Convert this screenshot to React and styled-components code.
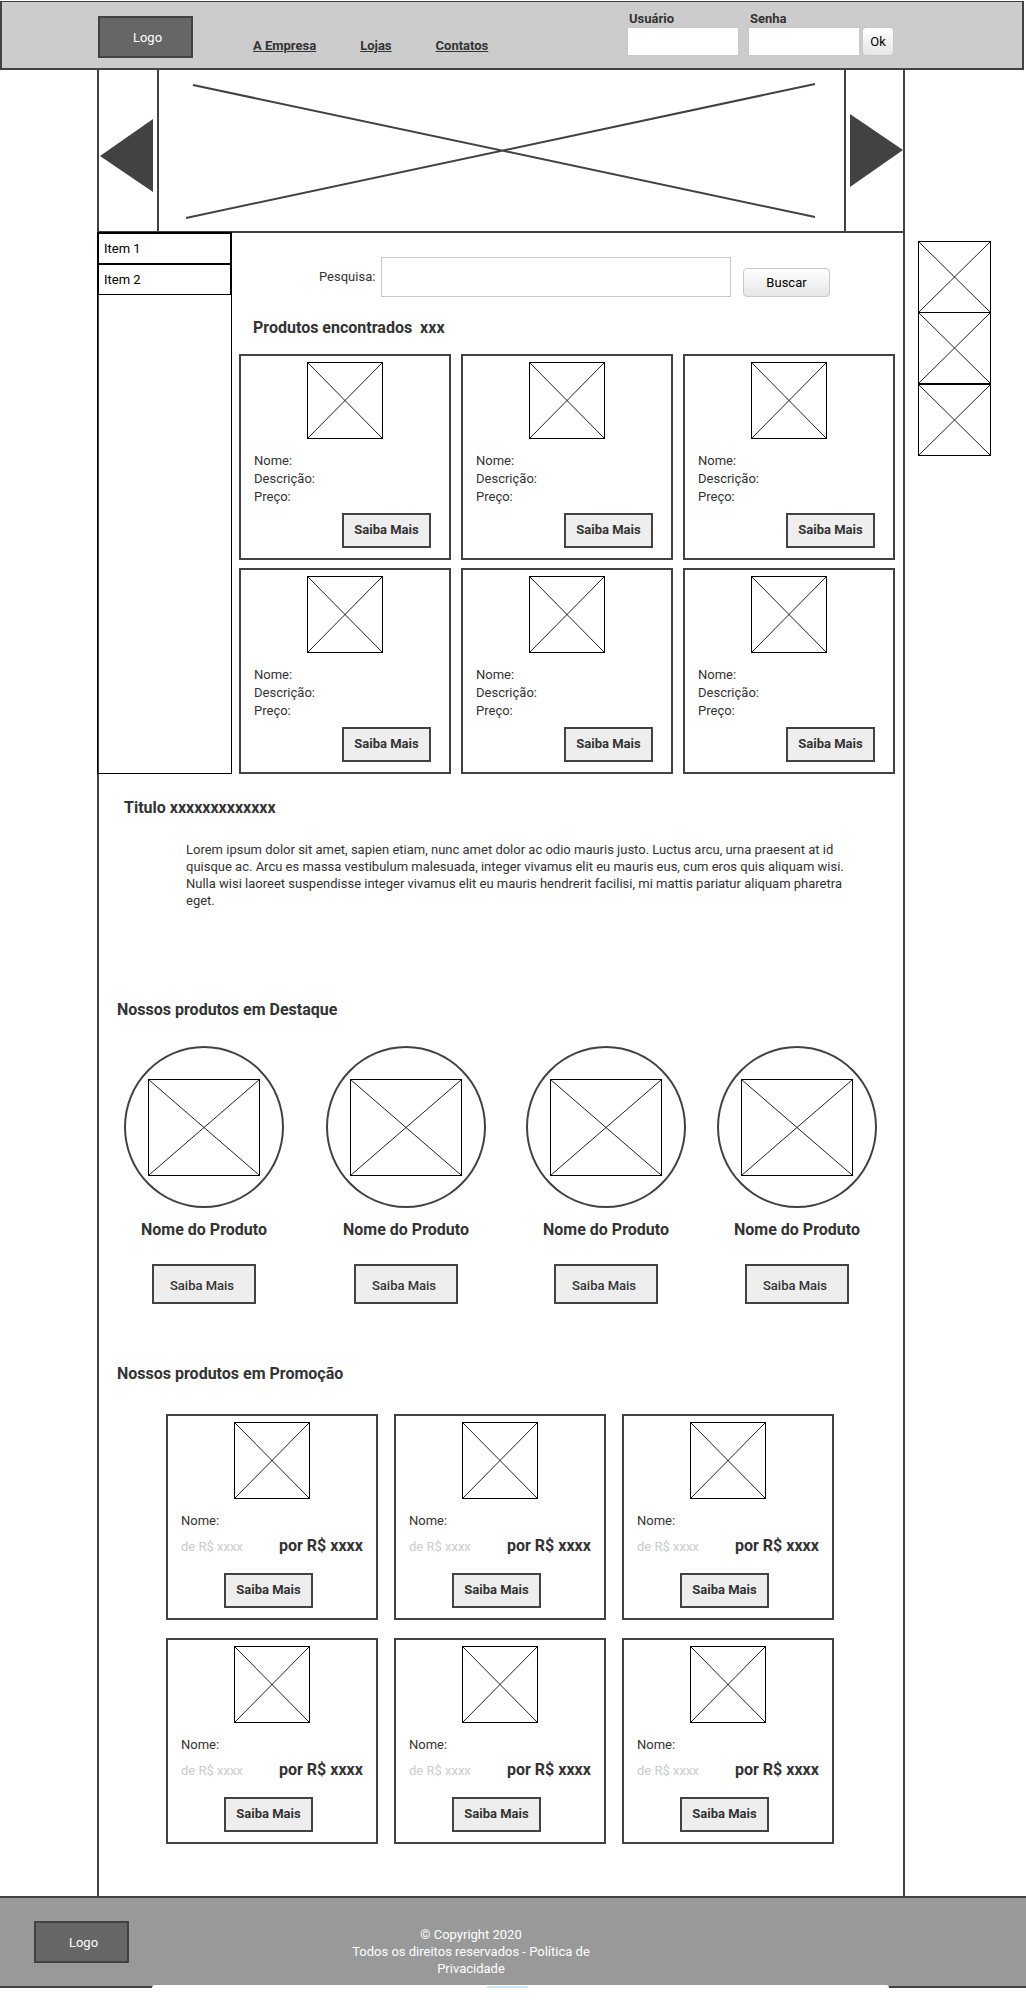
import React from "react";
import styled, { createGlobalStyle } from "styled-components";

const line = "#424242";
const ink = "#333";

const GlobalStyle = createGlobalStyle`
  * { box-sizing: border-box; }
  body {
    margin: 0;
    background: #fff;
    color: ${ink};
    font-family: Roboto, "Liberation Sans", sans-serif;
    font-size: 13px;
    line-height: 17px;
  }
  h2, h3, p, ul { margin: 0; padding: 0; }
  ul { list-style: none; }
  button, input { font: inherit; margin: 0; }
`;

const Header = styled.header`
  display: flex;
  align-items: flex-start;
  margin: 1px 2px 0 0;
  padding-left: 96px;
  height: 69px;
  background: #ccc;
  border: 2px solid ${line};
  border-top-width: 1px;
`;

const Logo = styled.div`
  flex: none;
  width: 95px;
  height: 42px;
  padding-left: 4px;
  border: 2px solid ${line};
  background: #666;
  color: #fff;
  line-height: 39px;
  text-align: center;
`;

const HeaderLogo = styled(Logo)`
  margin-top: 14px;
`;

const Nav = styled.nav`
  display: flex;
  gap: 44px;
  margin: 35px 0 0 60px;
`;

const NavLink = styled.a`
  color: ${ink};
  font-weight: 700;
  text-decoration: underline;
  white-space: nowrap;
`;

const Login = styled.form`
  display: flex;
  align-items: flex-end;
  margin: 7px 128px 0 auto;
`;

const Field = styled.div`
  display: flex;
  flex-direction: column;
  width: 112px;
  margin-right: 9px;

  &:nth-of-type(2) { margin-right: 2px; }
`;

const FieldLabel = styled.label`
  padding: 1px 0 0 2px;
  font-weight: 700;
`;

const TextInput = styled.input`
  width: 100%;
  height: ${(p) => p.$height}px;
  padding: 0 6px;
  background: #fff;
  border: 1px solid #c8c8c8;
  border-radius: 0;
`;

const SoftButton = styled.button`
  width: ${(p) => p.$width}px;
  height: 29px;
  padding: 0;
  border: 1px solid #c8c8c8;
  border-radius: 4px;
  background: linear-gradient(#fff, #e6e6e6);
  color: #000;
`;

const Middle = styled.div`
  display: flex;
  align-items: stretch;
  padding-left: 97px;
`;

const Frame = styled.main`
  flex: 1;
  min-width: 0;
  padding-bottom: 52px;
  border: solid ${line};
  border-width: 0 2px;
`;

const Rail = styled.aside`
  width: 121px;
  padding: 171px 0 0 13px;
`;

const Carousel = styled.section`
  display: flex;
  height: 163px;
  border-bottom: 2px solid ${line};
`;

const Arrow = styled.button`
  flex: none;
  width: ${(p) => p.$width}px;
  padding: ${(p) => p.$pad};
  background: none;
  border: solid ${line};
  border-width: ${(p) => (p.$side === "left" ? "0 2px 0 0" : "0 0 0 2px")};
  text-align: left;

  svg { display: block; }
`;

const Slide = styled.svg`
  flex: 1;
  min-width: 0;
  height: 161px;
`;

const Catalog = styled.div`
  display: flex;
`;

const Sidebar = styled.nav`
  flex: none;
  width: 135px;
  margin: -1px 0 0 -2px;
  border: 1px solid #000;
`;

const SidebarItem = styled.li`
  height: 31px;
  border: 1px solid #000;
`;

const SidebarLink = styled.a`
  display: block;
  padding-left: 5px;
  color: #000;
  line-height: 29px;
  text-decoration: none;
`;

const Results = styled.section`
  flex: 1;
  min-width: 0;
  padding: 24px 8px 0 7px;
`;

const Search = styled.form`
  display: flex;
  align-items: flex-end;
  padding: 0 65px 0 80px;
`;

const SearchLabel = styled.label`
  margin-right: 6px;
  line-height: 40px;
`;

const SearchBox = styled.div`
  flex: 1;
  margin-right: 12px;
  display: flex;
`;

const Heading = styled.h2`
  padding: ${(p) => p.$pad};
  font-size: 16px;
  line-height: 20px;
  font-weight: 700;
  white-space: pre;
`;

const CardGrid = styled.div`
  display: grid;
  grid-template-columns: repeat(3, minmax(0, 1fr));
  gap: ${(p) => p.$gap};
  padding: ${(p) => p.$pad || 0};
`;

const Card = styled.article`
  display: flex;
  flex-direction: column;
  height: 206px;
  padding: 6px 13px 0;
  border: 2px solid ${line};
`;

const CrossFrame = styled.div`
  flex: none;
  align-self: center;
  width: ${(p) => p.$w}px;
  height: ${(p) => p.$h}px;
  border: 1px solid #000;

  svg { display: block; width: 100%; height: 100%; }
`;

const Thumb = styled(CrossFrame)`
  &:nth-child(2) { height: 71px; border-top: 0; }
`;

const Specs = styled.div`
  padding-top: 13px;
  line-height: 18px;
`;

const MoreButton = styled.button`
  width: ${(p) => (p.$large ? 104 : 89)}px;
  height: ${(p) => (p.$large ? 40 : 35)}px;
  padding: ${(p) => (p.$large ? "2px 4px 0 0" : "0 0 2px")};
  background: #eee;
  border: 2px solid ${line};
  color: ${ink};
  font-weight: ${(p) => (p.$large ? 500 : 700)};
`;

const CardAction = styled.div`
  display: flex;
  justify-content: ${(p) => (p.$center ? "center" : "flex-end")};
  padding: ${(p) => (p.$center ? "17px 7px 0 0" : "7px 5px 0 0")};
`;

const Prices = styled.div`
  display: flex;
  justify-content: space-between;
  align-items: baseline;
  height: 26px;
  padding-top: 6px;
  line-height: 20px;
  white-space: nowrap;
`;

const OldPrice = styled.span`
  color: #ccc;
`;

const NewPrice = styled.strong`
  width: 84px;
  font-size: 16px;
`;

const Story = styled.p`
  padding: 23px 52px 0 87px;
`;

const Featured = styled.div`
  display: grid;
  grid-template-columns: 202fr 200fr 191fr 160fr;
  padding: 26px 26px 0 25px;
`;

const FeaturedItem = styled.article`
  display: flex;
  flex-direction: column;
  align-items: center;
  width: 160px;
`;

const Circle = styled.div`
  display: flex;
  align-items: center;
  justify-content: center;
  width: 160px;
  height: 162px;
  border: 2px solid ${line};
  border-radius: 50%;
`;

const ProductName = styled.h3`
  padding: 12px 0 24px;
  font-size: 16px;
  line-height: 20px;
  font-weight: 700;
  white-space: nowrap;
`;

const Footer = styled.footer`
  display: flex;
  flex-direction: column;
  background: #999;
  border: solid ${line};
  border-width: 2px 0 0;
`;

const FooterBody = styled.div`
  display: flex;
  align-items: flex-start;
  height: 87px;
  padding: 23px 34px 0;
`;

const Copyright = styled.p`
  width: 242px;
  margin: 5px 0 0 221px;
  color: #fff;
  text-align: center;
`;

const FooterEdge = styled.div`
  display: flex;
  height: 3px;
  padding: 0 137px 0 152px;
  background: linear-gradient(#999 1px, ${line} 1px);
`;

const Sheet = styled.div`
  flex: 1;
  display: flex;
  align-items: flex-end;
  justify-content: center;
  padding-right: 26px;
  background: #fff;
  border-radius: 4px 4px 0 0;
`;

const SheetTab = styled.div`
  width: 41px;
  height: 2px;
  background: #cfe3f8;
`;

function Diagonals() {
  return (
    <svg viewBox="0 0 100 100" preserveAspectRatio="none" aria-hidden="true">
      <path
        d="M0 0L100 100M100 0L0 100"
        stroke="#222"
        strokeWidth="1"
        fill="none"
        vectorEffect="non-scaling-stroke"
      />
    </svg>
  );
}

function ResultCard() {
  return (
    <Card>
      <CrossFrame $w={76} $h={77}><Diagonals /></CrossFrame>
      <Specs>
        <p>Nome:</p>
        <p>Descrição:</p>
        <p>Preço:</p>
      </Specs>
      <CardAction><MoreButton type="button">Saiba Mais</MoreButton></CardAction>
    </Card>
  );
}

function PromoCard() {
  return (
    <Card>
      <CrossFrame $w={76} $h={77}><Diagonals /></CrossFrame>
      <Specs><p>Nome:</p></Specs>
      <Prices>
        <OldPrice>de R$ xxxx</OldPrice>
        <NewPrice>por R$ xxxx</NewPrice>
      </Prices>
      <CardAction $center><MoreButton type="button">Saiba Mais</MoreButton></CardAction>
    </Card>
  );
}

const six = [1, 2, 3, 4, 5, 6];
const hold = (e) => e.preventDefault();

export default function App() {
  return (
    <>
      <GlobalStyle />
      <Header>
        <HeaderLogo>Logo</HeaderLogo>
        <Nav>
          <NavLink href="#empresa">A Empresa</NavLink>
          <NavLink href="#lojas">Lojas</NavLink>
          <NavLink href="#contatos">Contatos</NavLink>
        </Nav>
        <Login onSubmit={hold}>
          <Field>
            <FieldLabel htmlFor="usuario">Usuário</FieldLabel>
            <TextInput id="usuario" type="text" $height={29} />
          </Field>
          <Field>
            <FieldLabel htmlFor="senha">Senha</FieldLabel>
            <TextInput id="senha" type="password" $height={29} />
          </Field>
          <SoftButton type="submit" $width={32}>Ok</SoftButton>
        </Login>
      </Header>

      <Middle>
        <Frame>
          <Carousel>
            <Arrow type="button" aria-label="Anterior" $side="left" $width={60} $pad="10px 0 0 1px">
              <svg width="53" height="73" viewBox="0 0 53 73"><path d="M0 37L53 0V73Z" fill={line} /></svg>
            </Arrow>
            <Slide viewBox="159 70 685 161" preserveAspectRatio="none" aria-hidden="true">
              <path d="M193 85L815 217M186 218L815 84" stroke={line} strokeWidth="2" fill="none" />
            </Slide>
            <Arrow type="button" aria-label="Próximo" $side="right" $width={59} $pad="0 0 0 4px">
              <svg width="53" height="73" viewBox="0 0 53 73"><path d="M53 36L0 0V73Z" fill={line} /></svg>
            </Arrow>
          </Carousel>

          <Catalog>
            <Sidebar>
              <ul>
                <SidebarItem><SidebarLink href="#item1">Item 1</SidebarLink></SidebarItem>
                <SidebarItem><SidebarLink href="#item2">Item 2</SidebarLink></SidebarItem>
              </ul>
            </Sidebar>
            <Results>
              <Search onSubmit={hold}>
                <SearchLabel htmlFor="pesquisa">Pesquisa:</SearchLabel>
                <SearchBox><TextInput id="pesquisa" type="text" $height={40} /></SearchBox>
                <SoftButton type="submit" $width={87}>Buscar</SoftButton>
              </Search>
              <Heading $pad="21px 0 16px 14px">{"Produtos encontrados  xxx"}</Heading>
              <CardGrid $gap="8px 10px">
                {six.map((n) => <ResultCard key={n} />)}
              </CardGrid>
            </Results>
          </Catalog>

          <Heading $pad="24px 0 0 25px">Titulo xxxxxxxxxxxxx</Heading>
          <Story>
            Lorem ipsum dolor sit amet, sapien etiam, nunc amet dolor ac odio mauris justo. Luctus
            arcu, urna praesent at id quisque ac. Arcu es massa vestibulum malesuada, integer
            vivamus elit eu mauris eus, cum eros quis aliquam wisi. Nulla wisi laoreet suspendisse
            integer vivamus elit eu mauris hendrerit facilisi, mi mattis pariatur aliquam pharetra
            eget.
          </Story>

          <Heading $pad="91px 0 0 18px">Nossos produtos em Destaque</Heading>
          <Featured>
            {[1, 2, 3, 4].map((n) => (
              <FeaturedItem key={n}>
                <Circle><CrossFrame $w={112} $h={97}><Diagonals /></CrossFrame></Circle>
                <ProductName>Nome do Produto</ProductName>
                <MoreButton type="button" $large>Saiba Mais</MoreButton>
              </FeaturedItem>
            ))}
          </Featured>

          <Heading $pad="60px 0 0 18px">Nossos produtos em Promoção</Heading>
          <CardGrid $gap="18px 16px" $pad="30px 69px 0 67px">
            {six.map((n) => <PromoCard key={n} />)}
          </CardGrid>
        </Frame>

        <Rail>
          <Thumb $w={73} $h={72}><Diagonals /></Thumb>
          <Thumb $w={73} $h={72}><Diagonals /></Thumb>
          <Thumb $w={73} $h={72}><Diagonals /></Thumb>
        </Rail>
      </Middle>

      <Footer>
        <FooterBody>
          <Logo>Logo</Logo>
          <Copyright>
            © Copyright 2020
            <br />
            Todos os direitos reservados - Política de Privacidade
          </Copyright>
        </FooterBody>
        <FooterEdge><Sheet><SheetTab /></Sheet></FooterEdge>
      </Footer>
    </>
  );
}
